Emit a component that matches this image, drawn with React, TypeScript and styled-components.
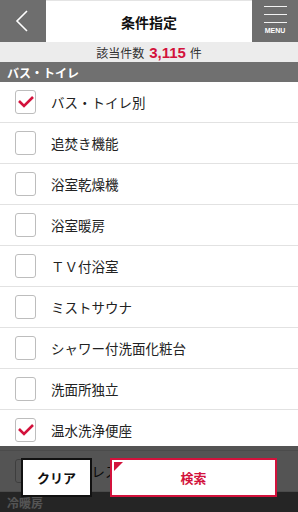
import styled, { createGlobalStyle } from "styled-components";

const GlobalStyle = createGlobalStyle`
  html, body {
    margin: 0;
    padding: 0;
    background: #fff;
    overflow: hidden;
  }
  * {
    box-sizing: border-box;
  }
  body {
    font-family: "Noto Sans CJK JP", "Noto Sans", sans-serif;
  }
`;

const items = [
  { label: "バス・トイレ別", checked: true },
  { label: "追焚き機能", checked: false },
  { label: "浴室乾燥機", checked: false },
  { label: "浴室暖房", checked: false },
  { label: "ＴＶ付浴室", checked: false },
  { label: "ミストサウナ", checked: false },
  { label: "シャワー付洗面化粧台", checked: false },
  { label: "洗面所独立", checked: false },
  { label: "温水洗浄便座", checked: true },
  { label: "タンクレストイレ", checked: false },
];

const App = () => {
  return (
    <Page>
      <GlobalStyle />
      <Header>
        <SideButton>
          <svg width="14" height="24" viewBox="0 0 14 24">
            <polyline
              points="12,2 2,12 12,22"
              fill="none"
              stroke="#fff"
              strokeWidth="1.6"
            />
          </svg>
        </SideButton>
        <Title>条件指定</Title>
        <MenuButton>
          <MenuLine />
          <MenuLine />
          <MenuLine />
          <MenuText>MENU</MenuText>
        </MenuButton>
      </Header>
      <CountBar>
        該当件数<Count>3,115</Count>件
      </CountBar>
      <Section>バス・トイレ</Section>
      {items.map((item) => (
        <Row key={item.label}>
          <Box>
            {item.checked && (
              <svg width="18" height="14" viewBox="0 0 18 14">
                <polyline
                  points="2,6 7,11 16,2"
                  fill="none"
                  stroke="#d3123c"
                  strokeWidth="2.6"
                />
              </svg>
            )}
          </Box>
          <Label>{item.label}</Label>
        </Row>
      ))}
      <Section>冷暖房</Section>
      <BottomBar>
        <ClearButton>クリア</ClearButton>
        <SearchButton>検索</SearchButton>
      </BottomBar>
    </Page>
  );
};

const Page = styled.div`
  width: 298px;
  height: 512px;
  overflow: hidden;
  position: relative;
`;

const Header = styled.div`
  display: flex;
  height: 42px;
  background: #fff;
`;

const SideButton = styled.div`
  width: 46px;
  height: 42px;
  background: #6e6e6e;
  display: flex;
  align-items: center;
  justify-content: center;
  padding-right: 2px;
`;

const Title = styled.div`
  flex: 1;
  display: flex;
  align-items: center;
  justify-content: center;
  font-size: 14px;
  font-weight: bold;
  color: #111;
  border-top: 1px solid #e4e4e4;
`;

const MenuButton = styled.div`
  width: 46px;
  height: 42px;
  background: #6e6e6e;
  display: flex;
  flex-direction: column;
  align-items: center;
  padding-top: 6px;
  gap: 7px;
`;

const MenuLine = styled.div`
  width: 23px;
  height: 1px;
  background: #f2f2f2;
`;

const MenuText = styled.div`
  margin-top: -3px;
  font-family: "Liberation Sans", sans-serif;
  font-size: 7px;
  font-weight: bold;
  color: #fff;
  line-height: 8px;
`;

const CountBar = styled.div`
  height: 20px;
  background: #ececec;
  display: flex;
  align-items: center;
  justify-content: center;
  font-size: 12px;
  color: #333;
`;

const Count = styled.span`
  color: #d3123c;
  font-weight: bold;
  font-size: 15px;
  margin: 0 4px 0 5px;
  font-family: "Liberation Sans", sans-serif;
`;

const Section = styled.div`
  height: 20px;
  background: #707070;
  color: #fff;
  font-weight: bold;
  font-size: 12px;
  display: flex;
  align-items: center;
  padding-left: 7px;
`;

const Row = styled.div`
  height: 41px;
  display: flex;
  align-items: center;
  padding-left: 15px;
  border-bottom: 1px solid #e2e2e2;
`;

const Box = styled.div`
  width: 21px;
  height: 24px;
  border: 1px solid #bdbdbd;
  border-radius: 3px;
  display: flex;
  align-items: center;
  justify-content: center;
  margin-right: 15px;
`;

const Label = styled.div`
  font-size: 13.5px;
  color: #222;
`;

const BottomBar = styled.div`
  position: absolute;
  left: 0;
  right: 0;
  bottom: 0;
  height: 66px;
  background: rgba(0, 0, 0, 0.67);
  display: flex;
  align-items: flex-start;
  padding: 12px 0 0 21px;
  gap: 18px;
`;

const ClearButton = styled.div`
  width: 71px;
  height: 39px;
  background: #fff;
  border: 2px solid #111;
  display: flex;
  align-items: center;
  justify-content: center;
  font-size: 13px;
  font-weight: bold;
  color: #111;
`;

const SearchButton = styled.div`
  position: relative;
  width: 167px;
  height: 39px;
  background: #fff;
  border: 2px solid #d3123c;
  display: flex;
  align-items: center;
  justify-content: center;
  font-size: 13px;
  font-weight: bold;
  color: #d3123c;

  &::before {
    content: "";
    position: absolute;
    top: 2px;
    left: 2px;
    border-top: 9px solid #d3123c;
    border-right: 9px solid transparent;
  }
`;

export default App;
